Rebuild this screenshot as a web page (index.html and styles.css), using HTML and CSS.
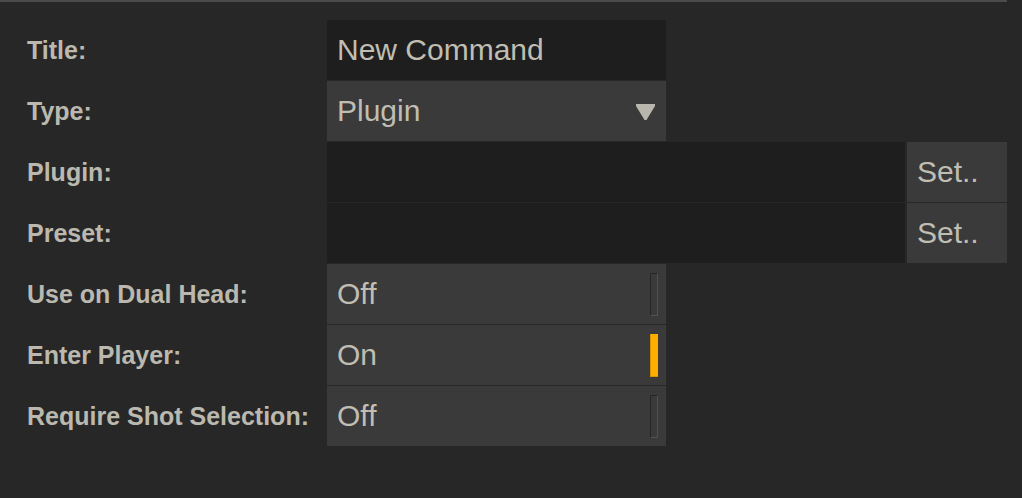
FILE: index.html
```html
<!DOCTYPE html>
<html>
<head>
<meta charset="utf-8">
<link rel="stylesheet" href="styles.css">
</head>
<body>
<div class="panel">
  <div class="topline"></div>
  <div class="form">
    <div class="label">Title:</div>
    <div class="field dark short"><span class="value">New Command</span></div>

    <div class="label">Type:</div>
    <div class="field light short between">
      <span class="value">Plugin</span>
      <svg class="arrow" width="19" height="16" viewBox="0 0 19 16"><polygon points="0,0 19,0 19,2 10.5,16 8.5,16 0,2" fill="#b9b7ad"/></svg>
    </div>

    <div class="label">Plugin:</div>
    <div class="picker">
      <div class="field dark path"></div>
      <div class="field light setbtn"><span class="value">Set..</span></div>
    </div>

    <div class="label">Preset:</div>
    <div class="picker">
      <div class="field dark path"></div>
      <div class="field light setbtn"><span class="value">Set..</span></div>
    </div>

    <div class="label">Use on Dual Head:</div>
    <div class="field light short between toggle">
      <span class="value">Off</span>
      <span class="ind off"></span>
    </div>

    <div class="label">Enter Player:</div>
    <div class="field light short between toggle">
      <span class="value">On</span>
      <span class="ind on"></span>
    </div>

    <div class="label">Require Shot Selection:</div>
    <div class="field light short between toggle">
      <span class="value">Off</span>
      <span class="ind off"></span>
    </div>
  </div>
</div>
</body>
</html>
```
FILE: styles.css
```css
html, body {
  margin: 0;
  padding: 0;
  background: #272727;
}
body {
  width: 1022px;
  height: 498px;
  overflow: hidden;
  font-family: "Liberation Sans", Arial, sans-serif;
}
.panel {
  width: 1007px;
}
.topline {
  height: 2px;
  background: #4b4b4b;
}
.form {
  padding-top: 18px;
  display: grid;
  grid-template-columns: 327px auto;
  grid-auto-rows: 60px;
  row-gap: 1px;
}
.label {
  display: flex;
  align-items: center;
  padding-left: 27px;
  padding-top: 1px;
  font-weight: bold;
  font-size: 25px;
  color: #bbb9af;
}
.field {
  box-sizing: border-box;
  height: 60px;
  display: flex;
  align-items: center;
  padding-left: 10px;
}
.between {
  justify-content: space-between;
}
.short {
  width: 339px;
}
.dark {
  background: #1e1e1e;
}
.light {
  background: #3a3a3a;
}
.value {
  font-size: 30px;
  color: #c0beb3;
}
.arrow {
  margin-right: 11px;
  margin-top: 2px;
}
.picker {
  display: flex;
  gap: 2px;
}
.path {
  width: 578px;
}
.setbtn {
  width: 100px;
  padding-left: 10px;
}
.toggle {
  padding-right: 8px;
}
.ind {
  box-sizing: border-box;
  width: 8px;
  height: 43px;
}
.ind.off {
  border-top: 1px solid #262626;
  border-left: 1px solid #262626;
  border-right: 1px solid #515151;
  border-bottom: 1px solid #515151;
}
.ind.on {
  background: #ffae00;
  border-left: 1px solid #d99400;
  border-bottom: 1px solid #d99400;
}
```
